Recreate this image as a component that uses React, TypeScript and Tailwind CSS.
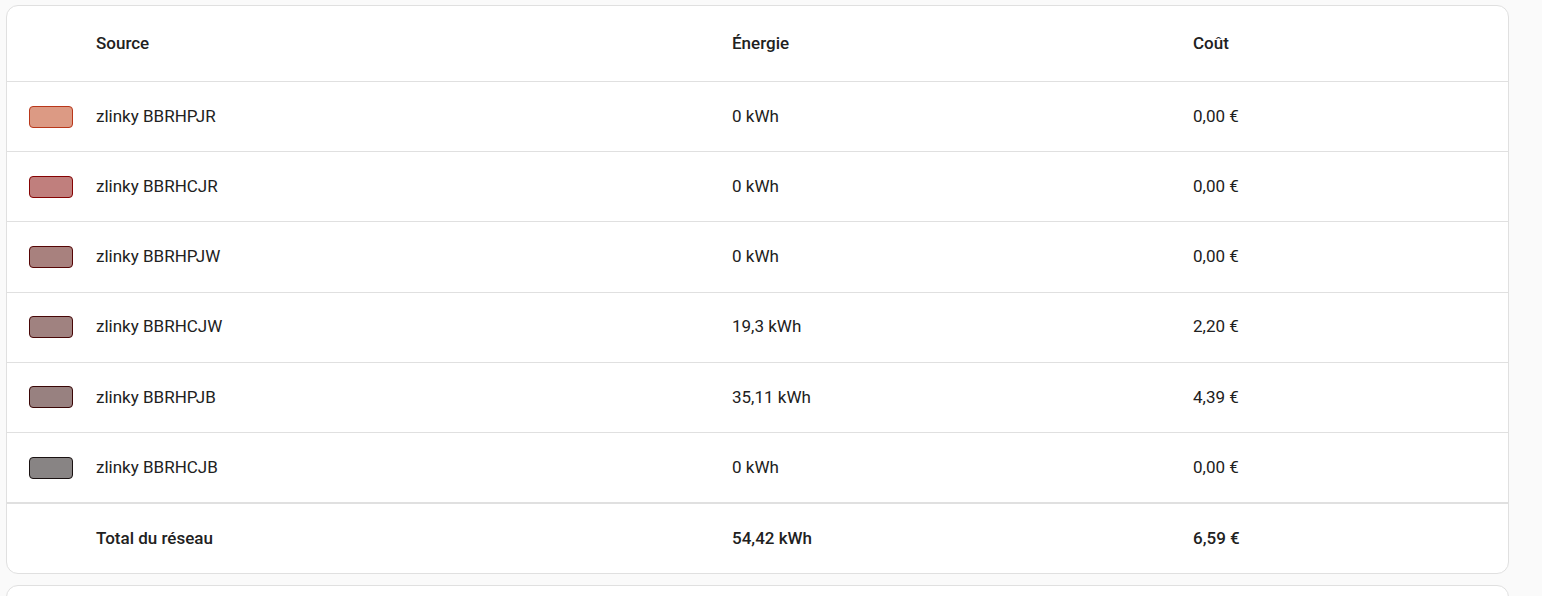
import React from "react";

const sources = [
  { name: "zlinky BBRHPJR", energy: "0 kWh", cost: "0,00 €", fill: "bg-[#dc9a84]", border: "border-[#b9371a]" },
  { name: "zlinky BBRHCJR", energy: "0 kWh", cost: "0,00 €", fill: "bg-[#c07f7d]", border: "border-[#860303]" },
  { name: "zlinky BBRHPJW", energy: "0 kWh", cost: "0,00 €", fill: "bg-[#a8817e]", border: "border-[#560505]" },
  { name: "zlinky BBRHCJW", energy: "19,3 kWh", cost: "2,20 €", fill: "bg-[#a08280]", border: "border-[#480707]" },
  { name: "zlinky BBRHPJB", energy: "35,11 kWh", cost: "4,39 €", fill: "bg-[#988180]", border: "border-[#3a0606]" },
  { name: "zlinky BBRHCJB", energy: "0 kWh", cost: "0,00 €", fill: "bg-[#888484]", border: "border-[#1a1212]" },
];

const cols = "grid grid-cols-[89px_636px_461px_1fr] items-center";

const App = () => {
  return (
    <div className="min-h-screen bg-[#fafafa] pt-[5px] pl-[6px] pr-[33px] font-['Roboto',sans-serif] text-[17px] text-[#212121]">
      <div className="bg-white border border-[#e0e0e0] rounded-xl overflow-hidden">
        {/* Header */}
        <div className={`${cols} h-[76px] border-b border-[#e0e0e0] font-medium`}>
          <div></div>
          <div>Source</div>
          <div>Énergie</div>
          <div>Coût</div>
        </div>

        {/* Rows */}
        {sources.map((s, i) => (
          <div key={i} className={`${cols} h-[70.2px] border-b border-[#e0e0e0]`}>
            <div className="pl-[22px]">
              <div className={`w-[44px] h-[22px] rounded-[4px] border ${s.fill} ${s.border}`}></div>
            </div>
            <div>{s.name}</div>
            <div>{s.energy}</div>
            <div>{s.cost}</div>
          </div>
        ))}

        {/* Total */}
        <div className={`${cols} h-[70px] border-t border-[#e0e0e0] font-medium`}>
          <div></div>
          <div>Total du réseau</div>
          <div>54,42 kWh</div>
          <div>6,59 €</div>
        </div>
      </div>

      <div className="mt-[11px] h-[40px] bg-white border border-[#e0e0e0] rounded-xl"></div>
    </div>
  );
};

export default App;
